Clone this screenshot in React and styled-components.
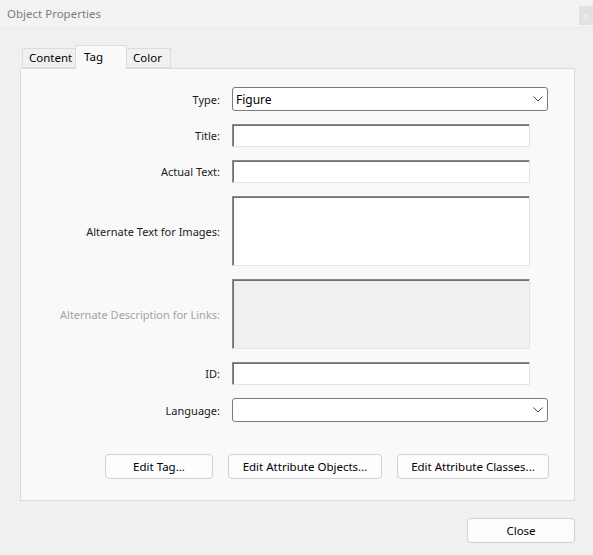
import styled, { createGlobalStyle } from "styled-components";

const GlobalStyle = createGlobalStyle`
  html, body {
    margin: 0;
    padding: 0;
    background: #f0f0f0;
  }
  body {
    font-family: "Noto Sans", "Liberation Sans", sans-serif;
    font-size: 11px;
    color: #1a1a1a;
  }
  * { box-sizing: border-box; }
`;

const Window = styled.div`
  width: 593px;
  height: 555px;
  display: flex;
  flex-direction: column;
  background: #f0f0f0;
  overflow: hidden;
`;

const TitleBar = styled.div`
  height: 28px;
  display: flex;
  align-items: flex-start;
  justify-content: space-between;
  background: #f3f3f3;
  border-bottom: 1px solid #ececec;
`;

const Title = styled.div`
  padding: 6px 0 0 7px;
  color: #7c7c7c;
  font-size: 11.5px;
`;

const CloseX = styled.div`
  margin-top: 6px;
  width: 14px;
  height: 19px;
  background: #e1e1e1;
  color: #f4f4f4;
  font-size: 11px;
  display: flex;
  align-items: center;
  justify-content: center;
`;

const Body = styled.div`
  flex: 1;
  display: flex;
  flex-direction: column;
  padding: 16px 18px 0 20px;
`;

const TabStrip = styled.div`
  display: flex;
  align-items: flex-end;
  padding-left: 2px;
  height: 24px;
  position: relative;
  z-index: 1;
`;

const Tab = styled.div`
  height: ${(p) => (p.active ? "24px" : "20px")};
  margin-bottom: ${(p) => (p.active ? "-1px" : "0")};
  padding: ${(p) => (p.active ? "3px 0 0 8px" : "1px 0 0 6px")};
  width: ${(p) => p.w}px;
  background: ${(p) => (p.active ? "#f9f9f9" : "#f0f0f0")};
  border: 1px solid #dcdcdc;
  border-bottom: ${(p) => (p.active ? "none" : "1px solid #dcdcdc")};
  margin-left: ${(p) => (p.first ? "0" : "-1px")};
  color: #000;
  font-size: 11.5px;
`;

const Panel = styled.div`
  width: 555px;
  background: #f9f9f9;
  border: 1px solid #dcdcdc;
  padding: 18px 0 21px 0;
`;

const Form = styled.div`
  display: grid;
  grid-template-columns: 199px 1fr;
  column-gap: 12px;
  row-gap: 13px;
  align-items: center;
`;

const Label = styled.div`
  text-align: right;
  color: ${(p) => (p.disabled ? "#a3a3a3" : "#1a1a1a")};
  white-space: nowrap;
`;

const Select = styled.div`
  width: 316px;
  height: 24px;
  background: #fff;
  border: 1px solid #7a7a7a;
  border-radius: 3px;
  display: flex;
  align-items: center;
  justify-content: space-between;
  padding: 0 4px 0 3px;
  color: #000;
  font-size: 12px;
`;

const Input = styled.div`
  width: 298px;
  height: ${(p) => p.h || 23}px;
  background: ${(p) => (p.disabled ? "#f0f0f0" : "#fff")};
  border: 1px solid;
  border-color: #8a8a8a #e3e3e3 #e3e3e3 #8a8a8a;
  box-shadow: inset 1px 1px 0 #6f6f6f;
`;

const ButtonRow = styled.div`
  display: flex;
  gap: 15px;
  padding-left: 84px;
  margin-top: 32px;
`;

const Button = styled.div`
  width: ${(p) => p.w}px;
  height: 25px;
  background: #fdfdfd;
  border: 1px solid #d0d0d0;
  border-radius: 4px;
  display: flex;
  align-items: center;
  justify-content: center;
  color: #000;
  font-size: 11.5px;
`;

const Footer = styled.div`
  display: flex;
  justify-content: flex-end;
  padding: 17px 0 0 0;
  width: 555px;
`;

const Chevron = () => (
  <svg width="10" height="6" viewBox="0 0 10 6">
    <path d="M0.5 0.5 L5 5 L9.5 0.5" fill="none" stroke="#444" strokeWidth="1" />
  </svg>
);

export default function App() {
  return (
    <Window>
      <GlobalStyle />
      <TitleBar>
        <Title>Object Properties</Title>
        <CloseX>x</CloseX>
      </TitleBar>
      <Body>
        <TabStrip>
          <Tab first w={54}>Content</Tab>
          <Tab active w={52}>Tag</Tab>
          <Tab w={45}>Color</Tab>
        </TabStrip>
        <Panel>
          <Form>
            <Label>Type:</Label>
            <Select>
              <span>Figure</span>
              <Chevron />
            </Select>
            <Label>Title:</Label>
            <Input />
            <Label>Actual Text:</Label>
            <Input />
            <Label>Alternate Text for Images:</Label>
            <Input h={70} />
            <Label disabled>Alternate Description for Links:</Label>
            <Input h={70} disabled />
            <Label>ID:</Label>
            <Input />
            <Label>Language:</Label>
            <Select>
              <span />
              <Chevron />
            </Select>
          </Form>
          <ButtonRow>
            <Button w={108}>Edit Tag...</Button>
            <Button w={154}>Edit Attribute Objects...</Button>
            <Button w={152}>Edit Attribute Classes...</Button>
          </ButtonRow>
        </Panel>
        <Footer>
          <Button w={108}>Close</Button>
        </Footer>
      </Body>
    </Window>
  );
}
